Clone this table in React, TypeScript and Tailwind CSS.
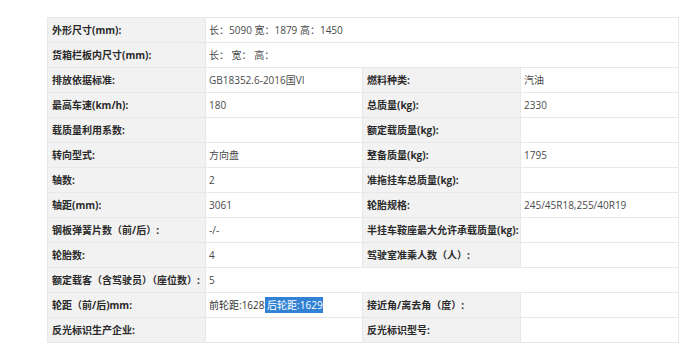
const rows: [string, string, string?, string?][] = [
  ['外形尺寸(mm):', '长：5090 宽：1879 高：1450'],
  ['货箱栏板内尺寸(mm):', '长：  宽：  高：'],
  ['排放依据标准:', 'GB18352.6-2016国VI', '燃料种类:', '汽油'],
  ['最高车速(km/h):', '180', '总质量(kg):', '2330'],
  ['载质量利用系数:', '', '额定载质量(kg):', ''],
  ['转向型式:', '方向盘', '整备质量(kg):', '1795'],
  ['轴数:', '2', '准拖挂车总质量(kg):', ''],
  ['轴距(mm):', '3061', '轮胎规格:', '245/45R18,255/40R19'],
  ['钢板弹簧片数（前/后）:', '-/-', '半挂车鞍座最大允许承载质量(kg):', ''],
  ['轮胎数:', '4', '驾驶室准乘人数（人）:', ''],
  ['额定载客（含驾驶员）（座位数）:', '5'],
  ['轮距（前/后)mm:', 'TRACK', '接近角/离去角（度）:', ''],
  ['反光标识生产企业:', '', '反光标识型号:', ''],
]

const label = 'h-[25px] border border-[#e8e8e8] bg-[#f2f2f2] pl-[4px] pr-0 text-left align-middle font-bold text-[#2a2a2a] whitespace-nowrap overflow-hidden'
const value = 'h-[25px] border border-[#e8e8e8] bg-white pl-[3px] pr-0 text-left align-middle text-[#4a4a4a] whitespace-nowrap overflow-hidden'

function Value({ text }: { text: string }) {
  if (text === 'TRACK') {
    return (
      <span className="text-[#333]">
        前轮距:1628<span className="bg-[#3182d4] py-[1px] text-white"> 后轮距:1629</span>
      </span>
    )
  }
  return <>{text}</>
}

export default function App() {
  return (
    <div
      className="h-[346px] w-[699px] overflow-hidden bg-white pl-[47px] pt-[17px] text-[10px] leading-none"
      style={{ fontFamily: '"Open Sans", "Noto Sans CJK SC", sans-serif' }}
    >
      <table className="w-[631px] table-fixed border-collapse">
        <colgroup>
          <col className="w-[158px]" />
          <col className="w-[157px]" />
          <col className="w-[158px]" />
          <col className="w-[158px]" />
        </colgroup>
        <tbody>
          {rows.map(([l1, v1, l2, v2]) => (
            <tr key={l1}>
              <td className={label}>{l1}</td>
              {l2 === undefined ? (
                <td colSpan={3} className={value}>
                  <Value text={v1} />
                </td>
              ) : (
                <>
                  <td className={value}>
                    <Value text={v1} />
                  </td>
                  <td className={label}>{l2}</td>
                  <td className={value}>{v2}</td>
                </>
              )}
            </tr>
          ))}
        </tbody>
      </table>
    </div>
  )
}
